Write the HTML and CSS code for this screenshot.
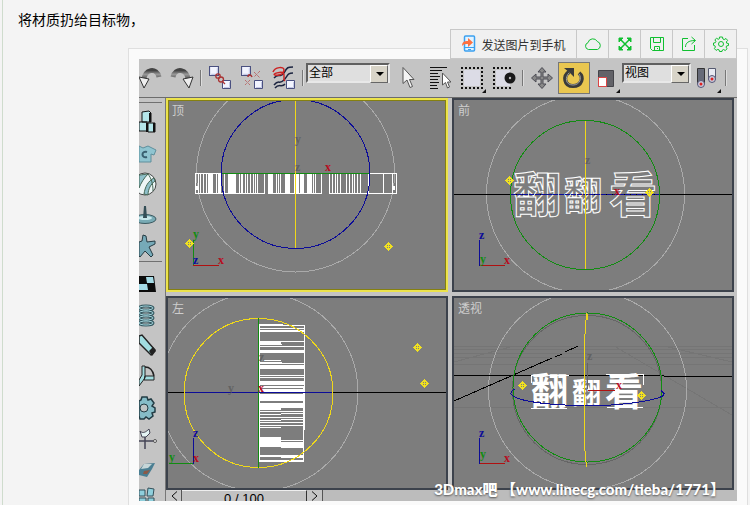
FILE: index.html
```html
<!DOCTYPE html>
<html lang="zh-CN">
<head>
    <meta charset="UTF-8">
    <title>3Dmax吧</title>
    <link rel="stylesheet" href="styles.css">
</head>
<body>
    <!-- Shared symbols -->
    <svg class="defs" aria-hidden="true">
        <symbol id="light" viewBox="0 0 10 10">
            <path d="M4.500 0v9M0 4.500h9M4.500 1L8 4.500 4.500 8 1 4.500z" fill="none" stroke="#f0e020"/>
        </symbol>
        <symbol id="box" viewBox="0 0 9 9">
            <path d="M.5.5h8v8h-8z" fill="#f2f4ff" stroke="#4a5080"/>
            <path d="M2 7.500h5.500V2" fill="none" stroke="#c3c8e4"/>
        </symbol>
        <linearGradient id="metal" x1="0" y1="0" x2="0" y2="1">
            <stop offset="0" stop-color="#444"/>
            <stop offset=".4" stop-color="#999"/>
            <stop offset="1" stop-color="#444"/>
        </linearGradient>
    </svg>

    <div class="post">
        <p class="post-text">将材质扔给目标物，</p>

        <div class="frame">
            <div class="share-bar">
                <button type="button" class="share-btn send">
                    <svg width="16" height="18" viewBox="0 0 16 18">
                        <rect x="3.500" y="1" width="10" height="15" rx="1" fill="#e2f3ff" stroke="#3aa0f0" stroke-width="1.500"/>
                        <path d="M3.500 12.500h10M7 14.500h3" stroke="#3aa0f0"/>
                        <path d="M1 11c0-4 2-5 6-5V3l5 4.500L7 12V9c-3 0-4 0-6 2z" fill="#ff7040"/>
                    </svg>
                    发送图片到手机
                </button>
                <button type="button" class="share-btn" aria-label="云">
                    <svg width="18" height="16" viewBox="0 0 18 16"><path d="M4.500 13.500a3.500 3.500 0 0 1-.5-6.800 5 5 0 0 1 9.300-1.200 4.200 4.200 0 0 1 .2 8z"/></svg>
                </button>
                <button type="button" class="share-btn" aria-label="全屏">
                    <svg width="14" height="14" viewBox="0 0 14 14"><path d="M2 2l10 10M12 2L2 12" stroke-width="1.500"/><path class="solid" d="M1 1h4L1 5zM13 1v4L9 1zM1 13V9l4 4zM13 13H9l4-4z"/></svg>
                </button>
                <button type="button" class="share-btn" aria-label="保存">
                    <svg width="16" height="16" viewBox="0 0 16 16"><path d="M1.500 1.500h13v13h-11l-2-2zM4.500 1.500v5h7v-5M5.500 14.500v-4h5v4M8.500 12v1"/></svg>
                </button>
                <button type="button" class="share-btn" aria-label="分享">
                    <svg width="16" height="16" viewBox="0 0 16 16"><path d="M7 2.500H1.500v12h12V9M4.500 11c0-4 3-6.500 9.500-6.500M10.500 1l4 3.500-4 3.500"/></svg>
                </button>
                <button type="button" class="share-btn" aria-label="设置">
                    <svg width="16" height="16" viewBox="0 0 16 16"><circle cx="8" cy="8" r="2.500"/><path d="M6.500 1h3l.4 2 1.300.6 1.800-1.100 1.600 1.900L13.300 6l.4 1.200 1.800.3v2l-1.900.4-.5 1.200 1 1.700-1.900 1.700-1.600-1-1.200.5-.4 1.500h-2.500l-.4-1.600-1.300-.5-1.700 1-1.700-1.800 1-1.600-.5-1.200L.5 9.300V7l1.800-.3.6-1.300-1-1.600 1.700-1.500 1.700 1 1-.5z"/></svg>
                </button>
            </div>

            <div class="app">
                <!-- Main toolbar -->
                <div class="toolbar">
                    <button type="button" class="tool first" aria-label="撤销">
                        <svg width="24" height="22" viewBox="0 0 24 22"><path d="M5 13C5 2 18 0 20 10" fill="none" stroke="url(#metal)" stroke-width="5"/><path d="M0 10l10 2-5 9z" fill="#eee" stroke="#333"/></svg>
                    </button>
                    <button type="button" class="tool" aria-label="重做">
                        <svg width="24" height="22" viewBox="0 0 24 22"><path d="M3 10C5 0 18 2 18 13" fill="none" stroke="url(#metal)" stroke-width="5"/><path d="M23 10l-10 2 6 9z" fill="#eee" stroke="#333"/></svg>
                    </button>
                    <span class="sep"></span>
                    <button type="button" class="tool" aria-label="链接">
                        <svg width="24" height="24" viewBox="0 0 24 24"><use href="#box" x="1" y="0" width="10" height="10"/><use href="#box" x="14" y="14" width="9" height="9"/><g fill="none" stroke="#a33" stroke-width="1.300"><circle cx="10" cy="10" r="2.200"/><circle cx="13" cy="13.500" r="2.500"/><path d="M14 15l3 3"/></g></svg>
                    </button>
                    <button type="button" class="tool" aria-label="断开链接">
                        <svg width="24" height="24" viewBox="0 0 24 24"><use href="#box" x="1" y="0" width="10" height="10"/><use href="#box" x="14" y="14" width="9" height="9"/><path d="M8 11c0-3 3-3 4 0" fill="none" stroke="#a33" stroke-width="1.500"/><path d="M14 6l6 6M20 5l-6 6M5 14l5 5M10 14l-5 5" fill="none" stroke="#b34a4a" stroke-dasharray="1 1"/></svg>
                    </button>
                    <button type="button" class="tool" aria-label="绑定">
                        <svg width="24" height="24" viewBox="0 0 24 24"><g fill="none" stroke="#1c2440" stroke-width="1.500"><path d="M2 12c5-6 7 1 10-5s4-6 9-6M2 19c5-6 5 0 10-5 4-4 3-7 9-7M3 22c4-5 7 0 10-4"/></g><path d="M1 6c2-5 11-6 11-2S7 10 3 9s7-4 8-2c3 2-1 6 2 8" fill="none" stroke="#c22" stroke-width="1.500"/><use href="#box" x="14" y="14" width="9" height="9"/></svg>
                    </button>
                    <span class="sep"></span>
                    <div class="select filter">
                        <select aria-label="选择过滤器"><option>全部</option></select>
                    </div>
                    <button type="button" class="tool" aria-label="选择对象">
                        <svg width="14" height="24" viewBox="0 0 14 24"><path d="M2 1.500v16l4-3.500 3 7.500 2.500-1-3-7H13z" fill="#f4f4f4" stroke="#555"/></svg>
                    </button>
                    <button type="button" class="tool" aria-label="按名称选择">
                        <svg width="22" height="24" viewBox="0 0 22 24"><path d="M1 1.500h17M1 4.500h12M1 7.500h8M1 10.500h10M1 13.500h8M1 16.500h9M1 19.500h7M1 22.500h8" stroke="#111"/><path d="M13.500 7v12l3-2.500 2 5.500 2-1-2-5h3.500z" fill="#fff" stroke="#555"/></svg>
                    </button>
                    <button type="button" class="tool more" aria-label="矩形选择区域">
                        <svg width="24" height="24" viewBox="0 0 24 24"><path d="M4 4h16v16H4z" fill="#dcdce6"/><path d="M1 2h22M1 22h22M2 1v22M22 1v22" stroke="#111" stroke-width="2" stroke-dasharray="2 2"/></svg>
                    </button>
                    <button type="button" class="tool" aria-label="窗口/交叉">
                        <svg width="24" height="24" viewBox="0 0 24 24"><path d="M4 4h14v16H4z" fill="#dcdce6"/><path d="M1 2h19M1 22h19M2 1v22" stroke="#111" stroke-width="2" stroke-dasharray="2 2"/><circle cx="18" cy="12" r="5.500" fill="#1a1a1a"/><circle cx="18" cy="12" r="1.200" fill="#bbb"/></svg>
                    </button>
                    <span class="sep"></span>
                    <button type="button" class="tool" aria-label="移动">
                        <svg width="22" height="22" viewBox="0 0 22 22"><path d="M11 .5l4 4.500h-3v5h5V7l4.500 4-4.500 4v-3h-5v5h3l-4 4.500L7 17h3v-5H5v3L.5 11 5 7v3h5V5H7z" fill="#888" stroke="#4c4c54"/></svg>
                    </button>
                    <button type="button" class="tool active" aria-label="旋转">
                        <svg width="24" height="24" viewBox="0 0 24 24"><path d="M7 6c-6 4-5 14 4 14 9 0 11-9 6-13" fill="none" stroke="#3a3a3a" stroke-width="4"/><path d="M7 7c-4 4-4 12 4 12 7 0 9-7 6-11" fill="none" stroke="#a0a0a0"/><path d="M2 2h10v9l-4-4z" fill="#3a3a3a"/></svg>
                    </button>
                    <button type="button" class="tool more" aria-label="缩放">
                        <svg width="16" height="17" viewBox="0 0 16 17"><path d="M.5.5h15v16H.5z" fill="#626268" stroke="#44444a"/><path d="M.5 7.500h8v9h-8z" fill="#fff" stroke="#d44"/></svg>
                    </button>
                    <div class="select coord">
                        <select aria-label="参考坐标系"><option>视图</option></select>
                    </div>
                    <button type="button" class="tool more" aria-label="使用轴点中心">
                        <svg width="22" height="24" viewBox="0 0 22 24"><path d="M1.500 2.500h7v15h-7z" fill="#666a78" stroke="#333"/><path d="M12.500 2.500h7v11h-7z" fill="#e8eaf2" stroke="#555a70"/><circle cx="5" cy="18" r="3.500" fill="#ccd" stroke="#557"/><circle cx="5" cy="18" r="1.500" fill="#d22"/><circle cx="16" cy="13" r="3.500" fill="#ccd" stroke="#557"/><circle cx="16" cy="13" r="1.500" fill="#d22"/></svg>
                    </button>
                    <span class="sep"></span>
                </div>

                <div class="workspace">
                    <!-- Side tools -->
                    <div class="side">
                        <hr>
                        <button type="button" class="side-tool" aria-label="物体">
                            <svg width="20" height="24" viewBox="0 0 20 24"><path d="M3 2l7-1 2 2v9H3zM0 12h8v9H0zM9 13h7v9H9z" fill="#b4e6ea" stroke="#111"/><path d="M11 3v9M8 13v9M15 13v9" stroke="#111" stroke-width="2"/></svg>
                        </button>
                        <button type="button" class="side-tool" aria-label="布料">
                            <svg width="20" height="24" viewBox="0 0 20 24"><path d="M0 5l4 2 5-2 8 4-2 5-3-1v8H0z" fill="#8fc4d0" stroke="#5f8f9c"/><path d="M8 11c-6-2-6 7 0 5" fill="none" stroke="#395f70" stroke-width="2"/></svg>
                        </button>
                        <button type="button" class="side-tool" aria-label="软体">
                            <svg width="20" height="24" viewBox="0 0 20 24"><circle cx="6" cy="12" r="11" fill="#eef6f6" stroke="#444"/><path d="M0 3c3 0 7-1 9-1C5 6 2 11 0 16zM15 6c-6 3-9 9-10 16l4 1c0-6 3-11 7-14z" fill="#8fc0ca" stroke="#465"/><path d="M9 2c3 4 5 9 5 17" fill="none" stroke="#465"/></svg>
                        </button>
                        <button type="button" class="side-tool" aria-label="旋转体">
                            <svg width="20" height="24" viewBox="0 0 20 24"><ellipse cx="6" cy="16" rx="11" ry="4.500" fill="#78aab4" stroke="#3b5960"/><ellipse cx="6" cy="15" rx="7" ry="2" fill="#c6e6ea"/><path d="M5 3l2 0 1 12H4z" fill="#344e56"/></svg>
                        </button>
                        <button type="button" class="side-tool" aria-label="变形">
                            <svg width="20" height="24" viewBox="0 0 20 24"><path d="M4 1l3 1 1 6 8-1v3l-6 3 4 8-2 2-6-6-5 6-1-1V8l3-1z" fill="#76aab8" stroke="#263c44"/></svg>
                        </button>
                        <hr class="tight">
                        <button type="button" class="side-tool" aria-label="棋盘">
                            <svg width="20" height="24" viewBox="0 0 20 24"><path d="M0 4h15l2 16H0z" fill="#0c0c0c"/><path d="M7 5h7l1 6H8zM0 12h8l1 6H0z" fill="#a6dbe6"/></svg>
                        </button>
                        <button type="button" class="side-tool" aria-label="弹簧">
                            <svg width="20" height="24" viewBox="0 0 20 24"><g fill="none" stroke="#355860" stroke-width="3"><ellipse cx="7" cy="5" rx="7" ry="2"/><ellipse cx="7" cy="10" rx="7" ry="2"/><ellipse cx="7" cy="15" rx="7" ry="2"/><ellipse cx="7" cy="20" rx="7" ry="2"/></g><g fill="none" stroke="#a8d8e0"><ellipse cx="7" cy="5" rx="7" ry="2"/><ellipse cx="7" cy="10" rx="7" ry="2"/><ellipse cx="7" cy="15" rx="7" ry="2"/><ellipse cx="7" cy="20" rx="7" ry="2"/></g></svg>
                        </button>
                        <button type="button" class="side-tool" aria-label="阻尼器">
                            <svg width="20" height="24" viewBox="0 0 20 24"><path d="M0 2l3-1 13 15-4 5L0 9z" fill="#a2dde0" stroke="#222" stroke-width="1.500"/><path d="M10 17l4-4 3 4-4 5z" fill="#222"/></svg>
                        </button>
                        <button type="button" class="side-tool" aria-label="铰链">
                            <svg width="20" height="24" viewBox="0 0 20 24"><path d="M3 1h3v12l-6 8v-6l3-5zM6 11h9v4H5z" fill="#a2dde0" stroke="#222"/><path d="M6 2c5 0 8 4 9 9" fill="none" stroke="#222" stroke-width="1.500"/></svg>
                        </button>
                        <button type="button" class="side-tool" aria-label="马达">
                            <svg width="20" height="24" viewBox="0 0 20 24"><path d="M3 1h5l1 3 3-1 3 4-2 3 3 2v4l-3 1 1 3-4 3-3-2-2 2H1l-1-3V5l2-1z" fill="#86bdc8" stroke="#223c44" stroke-width="1.500"/><circle cx="5" cy="12" r="4" fill="#bfc4c4" stroke="#223c44"/></svg>
                        </button>
                        <button type="button" class="side-tool" aria-label="风">
                            <svg width="20" height="24" viewBox="0 0 20 24"><path d="M0 14h15M6 9v13" stroke="#445" stroke-width="1.500"/><path d="M1 4c3 3 6 1 9-2l1 4-4 4H3z" fill="#e4f4f4" stroke="#445"/><circle cx="16" cy="14" r="1.500" fill="#eee" stroke="#555"/></svg>
                        </button>
                        <button type="button" class="side-tool" aria-label="玩具车">
                            <svg width="20" height="24" viewBox="0 0 20 24"><path d="M0 12l5-6 11-1-3 6-5 8-8-2z" fill="#4a7e92"/><path d="M5 6l8 0-4 4-7 1z" fill="#c6d6d8"/><path d="M5 13l6-1-3 4H4z" fill="#8b5a48"/></svg>
                        </button>
                        <button type="button" class="side-tool cut" aria-label="断裂">
                            <svg width="20" height="24" viewBox="0 0 20 24"><path d="M0 5h6v6H0zM9 3l6 1-1 7H8zM0 13h7v9H0zM9 13h6v9H9z" fill="#8fcfdc" stroke="#34505a"/></svg>
                        </button>
                    </div>

                    <div class="stage">
                        <div class="viewports">
                            <!-- Top view -->
                            <svg class="viewport selected" viewBox="0 0 278 190" preserveAspectRatio="xMidYMid slice">
                                <circle class="ring" cx="127.500" cy="73" r="99"/>
                                <g class="bars">
                                    <path d="M27 73.500h202M27 93.500h70M100 93.500h54M161 93.500h68"/>
                                    <path d="M27.500 73v21M30.500 73v20M32.500 73v20M35.500 73v20M38.500 73v20M48.500 73v20M50.500 73v20M56.500 73v20M71.500 73v20M77.500 73v20M79.500 73v20M82.500 73v20M85.500 73v20M87.500 73v20M89.500 73v20M96.500 73v20M108.500 73v20M110.500 73v20M112.500 73v20M126.500 73v20M128.500 73v20M145.500 73v20M147.500 73v20M153.500 73v20M161.500 73v20M164.500 73v20M167.500 73v20M169.500 73v20M172.500 73v20M178.500 73v20M181.500 73v20M184.500 73v20M186.500 73v20M189.500 73v20M192.500 73v20M200.500 73v20M215.500 73v20M224.500 73v20M228.500 73v21"/>
                                    <path class="fill" d="M40 73h5v20h-5zM51 73h2v20h-2zM60 73h8v20h-8zM73 73h2v20h-2zM100 73h5v20h-5zM117 73h5v20h-5zM129 73h2v20h-2zM132 73h4v20h-4zM139 73h5v20h-5z"/>
                                    <path d="M29.500 86v4M225.500 86v4" stroke-width="3"/>
                                </g>
                                <path class="green" d="M54 73.500h147"/>
                                <circle class="blue" cx="127.500" cy="74" r="74.500"/>
                                <path class="yellow" d="M127.500 0v148"/>
                                <text class="axis dim" x="127" y="43">y</text>
                                <text class="axis dim" x="127" y="71">z</text>
                                <text class="axis tx" x="157" y="71">x</text>
                                <path class="green" d="M25.500 140v25"/>
                                <path class="red" d="M25 165.500h26"/>
                                <text class="axis ty" x="25" y="138">y</text>
                                <text class="axis tz" x="25" y="164">z</text>
                                <text class="axis tx" x="50" y="164">x</text>
                                <use href="#light" x="17" y="139" width="10" height="10"/>
                                <use href="#light" x="216" y="142" width="10" height="10"/>
                                <text class="label" x="4" y="15">顶</text>
                            </svg>

                            <!-- Front view -->
                            <svg class="viewport" viewBox="0 0 278 190" preserveAspectRatio="xMidYMid slice">
                                <circle class="ring" cx="131.500" cy="94" r="99"/>
                                <path class="black" d="M0 94.500h278"/>
                                <g class="wire">
                                    <text x="59" y="112" font-size="48">翻</text>
                                    <text x="110" y="109" font-size="38">翻</text>
                                    <text x="155" y="112" font-size="48">看</text>
                                </g>
                                <path class="blue" d="M57 94.500h148" stroke-dasharray="5 1"/>
                                <circle class="green" cx="131" cy="95" r="74.500"/>
                                <path class="yellow" d="M131.500 21v148"/>
                                <text class="axis dim" x="131" y="64">z</text>
                                <text class="axis tx" x="160" y="95">x</text>
                                <path class="blue" d="M25.500 140v26"/>
                                <path class="red" d="M26 165.500h25"/>
                                <text class="axis tz" x="25" y="139">z</text>
                                <text class="axis ty" x="26" y="163">y</text>
                                <text class="axis tx" x="50" y="164">x</text>
                                <use href="#light" x="51" y="76" width="10" height="10"/>
                                <use href="#light" x="191" y="88" width="10" height="10"/>
                                <text class="label" x="4" y="15">前</text>
                            </svg>

                            <!-- Left view -->
                            <svg class="viewport" viewBox="0 0 278 190" preserveAspectRatio="xMidYMid slice">
                                <circle class="ring" cx="91" cy="94" r="99"/>
                                <g class="bars">
                                    <path d="M91.500 26v138M136.500 27v105M135.500 84v80M91 26.500h24M91 27.500h45M91 163.500h45"/>
                                    <path d="M91 30.500h45M91 33.500h45M91 43.500h45M91 46.500h23M91 48.500h45M91 62.500h22M91 77.500h45M91 79.500h45M91 113.500h45M91 116.500h22M91 119.500h45M91 122.500h22M91 124.500h45M113 115.500h23M113 121.500h23M91 127.500h45M91 129.500h22M91 158.500h22M113 159.500h23M91 162.500h45"/>
                                    <path class="fill" d="M91 32h45v2H91zM91 44h22v3H91zM91 52h45v3H91zM91 64h45v7H91zM91 83h45v7H91zM91 91h45v3H91zM91 96h45v7H91zM91 105h45v5H91zM91 110h22v2H91zM91 139h22v10H91zM113 142h23v8h-23zM91 157h45v2H91z"/>
                                </g>
                                <path class="gap-line" d="M92 66.500h44M114 64.500h22M92 87.500h44M113 143.500h22"/>
                                <path class="black" d="M0 94.500h278"/>
                                <path class="blue" d="M16 94.500h149"/>
                                <circle class="yellow" cx="90.500" cy="95" r="74.500"/>
                                <path class="green" d="M90.500 20v150"/>
                                <text class="axis dim" x="60" y="94">y</text>
                                <text class="axis dim" x="91" y="63">z</text>
                                <text class="axis tx" x="90" y="94">x</text>
                                <path class="blue" d="M25.500 140v26"/>
                                <path class="green" d="M1 165.500h24"/>
                                <text class="axis tz" x="25" y="139">z</text>
                                <text class="axis ty" x="1" y="163">y</text>
                                <text class="axis tx" x="25" y="164">x</text>
                                <use href="#light" x="245" y="45" width="10" height="10"/>
                                <use href="#light" x="252" y="81" width="10" height="10"/>
                                <text class="label" x="4" y="15">左</text>
                            </svg>

                            <!-- Perspective view -->
                            <svg class="viewport" viewBox="0 0 278 190" preserveAspectRatio="xMidYMid slice">
                                <path class="grid" d="M0 48.500h278M0 51.500h278M0 55.500h278M0 59.500h278M0 66.500h278M0 109.500h278M0 64l60-16M160 48l118 69M210 48l68 16"/>
                                <circle class="ring" cx="133.500" cy="92" r="99"/>
                                <path class="black" d="M0 77.500h140L278 78.500"/>
                                <path class="black" d="M0 103L98 60M101 59l7-3M111 54l13-6"/>
                                <g class="solid-text">
                                    <text x="77" y="107" font-size="37">翻</text>
                                    <text x="118" y="106" font-size="29">翻</text>
                                    <text x="151" y="107" font-size="38">看</text>
                                </g>
                                <path class="white" d="M77.500 85v-8h37M77 110.500h36M152 76.500h37v10M153 109.500h36"/>
                                <circle class="shade" cx="133" cy="92" r="74.500"/>
                                <circle class="green" cx="133.500" cy="89.500" r="74.500"/>
                                <path class="blue" d="M61 91c-16 8 16 16 69 16.500 40 1 88-7 79-13l-2-2"/>
                                <path class="yellow" d="M132.500 15l-2 28v105l2 21"/>
                                <path class="yellow" d="M133 16v6" stroke-width="2"/>
                                <path class="shade" d="M133.500 65v26"/>
                                <text class="axis dim" x="133" y="62">z</text>
                                <path class="red" d="M134 92.500h27"/>
                                <text class="axis tx" x="162" y="91">x</text>
                                <path class="blue" d="M25.500 140v26"/>
                                <path class="red" d="M26 165.500h25"/>
                                <text class="axis tz" x="25" y="139">z</text>
                                <text class="axis ty" x="26" y="160">y</text>
                                <text class="axis tx" x="50" y="164">x</text>
                                <use href="#light" x="64" y="83" width="10" height="10"/>
                                <use href="#light" x="183" y="93" width="10" height="10"/>
                                <text class="label" x="4" y="15">透视</text>
                            </svg>
                        </div>

                        <!-- Time slider -->
                        <div class="timeline">
                            <button type="button" class="step" aria-label="上一帧"><svg width="8" height="10" viewBox="0 0 8 10"><path d="M7 .5L2 5l5 4.500" fill="none" stroke="#111"/></svg></button>
                            <span class="frame-count">0 / 100</span>
                            <button type="button" class="step" aria-label="下一帧"><svg width="8" height="10" viewBox="0 0 8 10"><path d="M1 .5L6 5 1 9.500" fill="none" stroke="#111"/></svg></button>
                        </div>
                    </div>
                </div>
                <span class="watermark">3Dmax吧 【www.linecg.com/tieba/1771】</span>
            </div>
        </div>
    </div>
</body>
</html>
```

FILE: styles.css
```css
* {
    box-sizing: border-box;
}

body {
    margin: 0;
    padding-left: 2px;
    background-color: #f4f4f4;
    font-family: "Liberation Sans", "Noto Sans CJK SC", sans-serif;
    font-size: 12px;
}

button,
select {
    font: inherit;
    margin: 0;
    padding: 0;
}

.defs {
    position: absolute;
    width: 0;
    height: 0;
}

/* Post */
.post {
    border-left: 1px solid #cfdccd;
    padding-top: 10px;
}

.post-text {
    margin: 0 0 18px 15px;
    font-size: 14px;
    line-height: 20px;
    color: #000;
}

.frame {
    position: relative;
    margin: 0 2px 0 125px;
    padding: 10px;
    border: 1px solid #dfdfdf;
    background-color: #fafafa;
}

/* Buttons over the corner of the frame */
.share-bar {
    position: absolute;
    top: -20px;
    right: 10px;
    z-index: 2;
    display: flex;
    height: 30px;
    border: 1px solid #c8c8c8;
    background-color: #f0f0f0;
}

.share-btn {
    display: flex;
    align-items: center;
    justify-content: center;
    width: 32px;
    border: none;
    border-left: 1px solid #c8c8c8;
    background: none;
    color: #333;
    cursor: pointer;
}

.share-btn svg {
    fill: none;
    stroke: #10c030;
}

.share-btn .solid {
    fill: #10c030;
}

.share-btn.send {
    width: 125px;
    gap: 4px;
    border-left: none;
}

.share-btn.send svg {
    stroke: none;
}

/* App window */
.app {
    position: relative;
    overflow: hidden;
    background-color: #c4c4c4;
}

.toolbar {
    display: flex;
    align-items: center;
    height: 39px;
    border-bottom: 1px solid #6c6c6c;
    overflow: hidden;
}

.tool {
    position: relative;
    display: flex;
    flex: none;
    align-items: center;
    justify-content: center;
    width: 32px;
    height: 32px;
    border: none;
    background: none;
}

.tool.first {
    width: 27px;
    justify-content: flex-start;
}

.tool.active {
    border: 1px solid #777;
    background-color: #e9c650;
}

.tool.more::after {
    content: "";
    position: absolute;
    right: 2px;
    bottom: 1px;
    border: 2px solid #111;
    border-top-color: transparent;
    border-left-color: transparent;
}

.sep {
    flex: none;
    width: 2px;
    height: 16px;
    margin: 0 2px;
    border-left: 1px solid #777;
    border-right: 1px solid #ddd;
}

.select {
    position: relative;
    flex: none;
    align-self: flex-start;
    height: 20px;
    margin-top: 4px;
}

.select select {
    width: 100%;
    height: 100%;
    padding: 0 1px;
    appearance: none;
    border: 2px solid;
    border-color: #606060 #e8e8e8 #e8e8e8 #606060;
    border-radius: 0;
    background-color: #dfdfdf;
    color: #000;
}

.select::before {
    content: "";
    position: absolute;
    top: 2px;
    right: 2px;
    width: 16px;
    height: 16px;
    border: 1px solid;
    border-color: #fff #666 #666 #fff;
    background-color: #d8d4c8;
    pointer-events: none;
}

.select::after {
    content: "";
    position: absolute;
    top: 9px;
    right: 6px;
    border: 4px solid transparent;
    border-top-color: #000;
    border-bottom: none;
    pointer-events: none;
}

.filter {
    width: 84px;
    margin-right: 2px;
}

.coord {
    width: 69px;
}

.workspace {
    display: flex;
}

/* Side tools */
.side {
    flex: none;
    width: 27px;
    border-right: 1px solid #777;
}

.side hr {
    height: 1px;
    margin: 4px 3px 3px 0;
    border: none;
    background-color: #707070;
}

.side hr.tight {
    margin-top: 0;
    margin-bottom: 6px;
}

.side-tool {
    display: flex;
    align-items: center;
    width: 100%;
    height: 31px;
    border: none;
    background: none;
}

.side-tool.cut {
    align-items: flex-start;
    height: 16px;
    overflow: hidden;
}

/* Viewports */
.stage {
    flex: 1;
    min-width: 0;
}

.viewports {
    display: grid;
    grid-template-columns: 1fr 1fr;
    gap: 4px;
    padding-right: 3px;
}

.viewport {
    display: block;
    width: 100%;
    min-width: 0;
    border: 2px solid #3c424c;
    background-color: #7d7d7d;
    shape-rendering: crispEdges;
}

.viewport.selected {
    border-color: #ece34c;
    outline: 1px solid #858010;
    outline-offset: -3px;
}

.viewport circle,
.viewport path {
    fill: none;
}

.ring {
    stroke: #aaa;
}

.grid {
    stroke: #757575;
}

.shade {
    stroke: #656565;
}

.black {
    stroke: #000;
}

.white,
.bars path {
    stroke: #fff;
}

.viewport .bars .fill {
    fill: #fff;
    stroke: none;
}

.gap-line {
    stroke: #7d7d7d;
}

.blue {
    stroke: #0c0c98;
}

.green {
    stroke: #118c11;
}

.red {
    stroke: #b01010;
}

.yellow {
    stroke: #f0d818;
}

.wire {
    font-family: "Noto Sans CJK SC", sans-serif;
    font-weight: 700;
    fill: none;
    stroke: #fff;
}

.solid-text {
    font-family: "Noto Sans CJK SC", sans-serif;
    font-weight: 700;
    fill: #fff;
}

.axis {
    font-family: "Liberation Serif", serif;
    font-size: 12px;
    font-weight: 700;
}

.tx {
    fill: #b80c20;
}

.ty {
    fill: #118c11;
}

.tz {
    fill: #0c0c98;
}

.dim {
    fill: #626262;
}

.label {
    font-size: 12px;
    fill: #cdcdcd;
}

/* Time slider */
.timeline {
    display: flex;
    height: 11px;
    overflow: hidden;
    background-color: #bcbcbc;
}

.step {
    display: flex;
    align-items: center;
    justify-content: center;
    width: 16px;
    height: 12px;
    border: none;
    border-right: 1px solid #555;
    background-color: #c6c6c6;
}

.frame-count {
    width: 125px;
    border-top: 1px solid #eee;
    border-right: 1px solid #333;
    background-color: #c2c2c2;
    font-size: 13px;
    line-height: 16px;
    text-align: center;
}

.watermark {
    position: absolute;
    right: 12px;
    bottom: 2px;
    color: #fff;
    font-family: Lato, "Noto Sans CJK SC", sans-serif;
    font-size: 15px;
    font-weight: 900;
    line-height: 20px;
    white-space: nowrap;
    text-shadow: 0 1px 2px #555;
}
```
